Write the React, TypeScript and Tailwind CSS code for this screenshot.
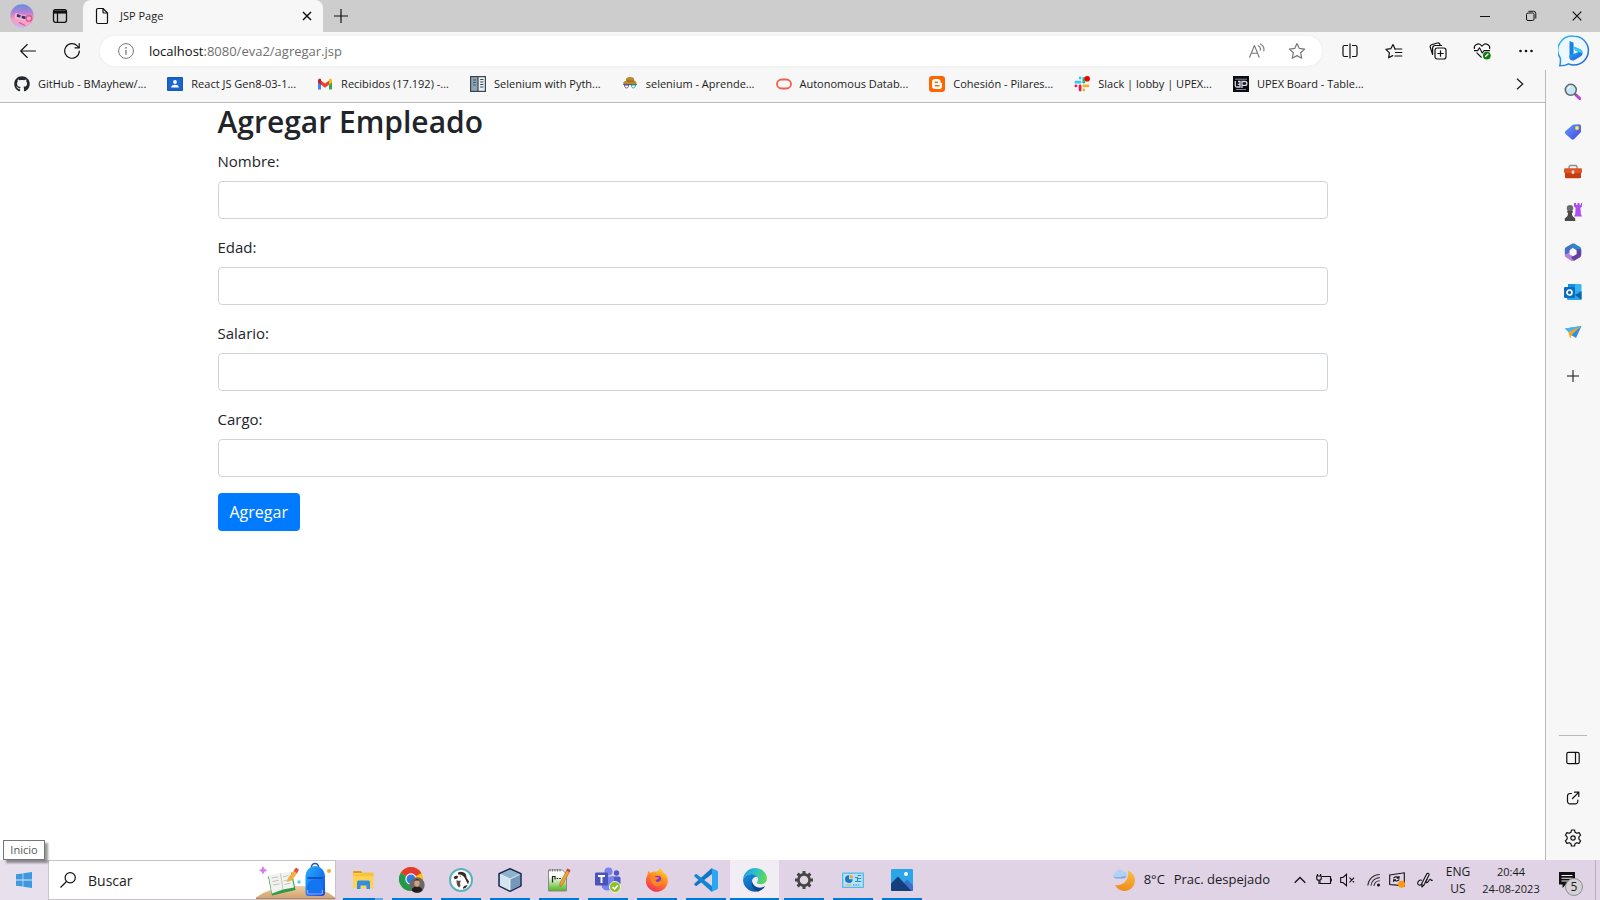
import type { ReactNode } from "react";
import { FaGithub } from "react-icons/fa";

type IconProps = { className?: string };

/* ---------- Title bar and toolbar icons ---------- */

const AvatarIcon = () => (
  <svg viewBox="0 0 24 24" className="size-6">
    <defs>
      <linearGradient id="avatarSky" x1="0" y1="0" x2="0" y2="1">
        <stop offset="0" stopColor="#5f8fe0" />
        <stop offset=".35" stopColor="#b97fd6" />
        <stop offset=".65" stopColor="#f49cc0" />
        <stop offset="1" stopColor="#c3b6f2" />
      </linearGradient>
    </defs>
    <circle cx="12" cy="12" r="11.700" fill="url(#avatarSky)" />
    <path d="M6 9l9 2.500 6 2-1.500 7-4 2-11-4.500z" fill="#f4a3c4" />
    <path d="M5.500 9l11 3-1.500 5L4.500 14z" fill="#f7b9d2" />
    <path d="M7 10l3.700 1-.5 2.700-3.500-1z M11.800 11.600l4 1-.5 2.700-3.700-1z" fill="#35336e" />
    <circle cx="19" cy="14.500" r="2.800" fill="none" stroke="#e0558f" strokeWidth="1.300" />
    <path d="M9 18.500l6 3" stroke="#e0558f" strokeWidth="1.300" />
  </svg>
);

const WorkspaceIcon = () => (
  <svg viewBox="0 0 16 16" className="size-4" fill="none" stroke="#111" strokeWidth="1.300">
    <rect x="1.500" y="1.700" width="13" height="12.600" rx="2" />
    <path d="M2 4h12" strokeWidth="3.200" />
    <path d="M5.500 5v9" />
  </svg>
);

const FileIcon = () => (
  <svg viewBox="0 0 14 18" className="h-[18px] w-[14px]" fill="none" stroke="#111" strokeWidth="1.200" strokeLinejoin="round">
    <path d="M3 1.500h5l4.500 4.500v9.500a1 1 0 0 1-1 1H3a1.500 1.500 0 0 1-1.500-1.500V3A1.500 1.500 0 0 1 3 1.500z" />
    <path d="M8 1.500V5a1 1 0 0 0 1 1h3.500" />
  </svg>
);

const CrossIcon = ({ className = "size-[10px]" }: IconProps) => (
  <svg viewBox="0 0 10 10" className={className} fill="none" stroke="#111" strokeWidth="1.200">
    <path d="M.7.7l8.600 8.600M9.300.7L.7 9.300" />
  </svg>
);

const TabCloseIcon = () => (
  <svg viewBox="0 0 10 10" className="size-[10px]" fill="none" stroke="#111" strokeWidth="1.500">
    <path d="M1 1l8 8M9 1L1 9" />
  </svg>
);

const PlusIcon = ({ className = "size-[14px]" }: IconProps) => (
  <svg viewBox="0 0 14 14" className={className} fill="none" stroke="#111" strokeWidth="1.200">
    <path d="M7 0v14M0 7h14" />
  </svg>
);

const RestoreIcon = () => (
  <svg viewBox="0 0 10 10" className="size-[10px]" fill="none" stroke="#111" overflow="visible">
    <rect x=".5" y="2" width="7.500" height="7.500" rx="1.500" />
    <path d="M2.500.3H7.500A2.300 2.300 0 0 1 9.800 2.600V7.500" />
  </svg>
);

const BackIcon = () => (
  <svg viewBox="0 0 16 16" className="size-4" fill="none" stroke="#111" strokeWidth="1.100" strokeLinecap="round" strokeLinejoin="round">
    <path d="M15.500 8H.7M7.200 1.500L.7 8l6.500 6.500" />
  </svg>
);

const ReloadIcon = () => (
  <svg viewBox="0 0 16 16" className="size-4" fill="none" stroke="#111" strokeWidth="1.200" strokeLinecap="round" strokeLinejoin="round">
    <path d="M15.300 8A7.300 7.300 0 1 1 13.200 2.800L15 4.600" />
    <path d="M15.200.6v4.200H11" />
  </svg>
);

const InfoIcon = () => (
  <svg viewBox="0 0 16 16" className="size-4" fill="none" stroke="#777">
    <circle cx="8" cy="8" r="7.400" />
    <path d="M8 7v4.700" strokeWidth="1.300" />
    <circle cx="8" cy="4.800" r=".9" fill="#777" stroke="none" />
  </svg>
);

const ReadAloudIcon = () => (
  <svg viewBox="0 0 16 16" className="size-4" fill="none" stroke="#777" strokeWidth="1.100" strokeLinecap="round" strokeLinejoin="round">
    <path d="M.6 14.200L5.400 2.500l4.800 11.700M2.200 10.300h6.400" />
    <path d="M9.200 2.700a3.800 3.800 0 0 1 2 4.600M11.500.9a6.600 6.600 0 0 1 3.300 7" />
  </svg>
);

const StarIcon = () => (
  <svg viewBox="0 0 18 18" className="size-[18px]" fill="none" stroke="#777" strokeWidth="1.200" strokeLinejoin="round">
    <path d="M9 1.500l2.300 4.900 5.300.7-3.900 3.700 1 5.400L9 13.600l-4.700 2.600 1-5.400L1.400 7.100l5.300-.7z" />
  </svg>
);

const SplitIcon = () => (
  <svg viewBox="0 0 16 16" className="size-4" fill="none" stroke="#111" strokeWidth="1.200">
    <path d="M6 2.500H2.500A1.500 1.500 0 0 0 1 4v8a1.500 1.500 0 0 0 1.500 1.500H6M10 2.500h3.500A1.500 1.500 0 0 1 15 4v8a1.500 1.500 0 0 1-1.500 1.500H10M8 .5v15" />
  </svg>
);

const FavoritesIcon = () => (
  <svg viewBox="0 0 18 16" className="h-4 w-[18px]" fill="none" stroke="#111" strokeWidth="1.200" strokeLinejoin="round" strokeLinecap="round">
    <path d="M10 6L8 1.500 5.800 5.700.9 6.400l3.500 3.500-.8 4.900L7.700 12.600" />
    <path d="M10 6h6.800M10.500 9.500h6.300M10 13h6.800" />
  </svg>
);

const CollectionsIcon = () => (
  <svg viewBox="0 0 18 18" className="size-[18px]" fill="none" stroke="#111" strokeWidth="1.200" strokeLinecap="round" strokeLinejoin="round">
    <rect x="6" y="6" width="11" height="11" rx="2.200" />
    <path d="M11.500 8.800v5.400M8.800 11.500h5.400" />
    <path d="M3.600 12.500L1.300 5.300A2 2 0 0 1 2.600 2.800L8.300 1a2 2 0 0 1 2.500 1.300l.4 1.200M3.600 12.500V6.200a2.700 2.700 0 0 1 2.700-2.700h6.200" />
  </svg>
);

const HeartPulseIcon = () => (
  <svg viewBox="0 0 18 18" className="size-[18px]" fill="none" stroke="#111" strokeWidth="1.100" strokeLinejoin="round">
    <path d="M1.400 7A4 4 0 0 1 8.200 3.300l.8.900.8-.9a4 4 0 0 1 6.800 3.700M3.600 10.700L8.500 15.500" />
    <path d="M1 8.600h3.700l1.800-2.800 2.700 5.200 1.800-2.400h6" />
    <circle cx="13.800" cy="13.600" r="3.900" fill="#107c10" stroke="none" />
    <path d="M12.200 14.800l3.100-3" stroke="#fff" strokeWidth="1.500" />
  </svg>
);

const DotsIcon = () => (
  <svg viewBox="0 0 16 4" className="h-1 w-4" fill="#111">
    <circle cx="2.500" cy="2" r="1.300" />
    <circle cx="8" cy="2" r="1.300" />
    <circle cx="13.500" cy="2" r="1.300" />
  </svg>
);

const BingIcon = () => (
  <svg viewBox="0 0 32 32" className="size-8">
    <defs>
      <linearGradient id="bingRing" x1="0" y1="0" x2="1" y2="1">
        <stop offset="0" stopColor="#35c5ee" />
        <stop offset="1" stopColor="#2456d8" />
      </linearGradient>
      <linearGradient id="bingMark" x1="0" y1="0" x2=".6" y2="1">
        <stop offset="0" stopColor="#1f7fe8" />
        <stop offset=".5" stopColor="#1d9bea" />
        <stop offset="1" stopColor="#2f5ce0" />
      </linearGradient>
    </defs>
    <path d="M16 1.200a14.300 14.300 0 1 1 0 28.800c-2.200 0-3.700-.3-5.500-1.200-2.500 1.500-5.500 2-8.700 2 .6-2.300.8-4.500.6-7.300A14.300 14.300 0 0 1 16 1.200z" fill="#eef7fe" stroke="url(#bingRing)" strokeWidth="1.500" />
    <path d="M11.500 6l4.100 1.700v12.800l-4.100 3.300z" fill="#1a80e6" />
    <path d="M11.500 20.500L20.500 17l-3.300-1.500-1.600-4 6.500 2.800c2 .9 2.500 2.300 2.400 4-.1 1.500-.8 2.500-2 3.200l-6.400 3.700c-2.200 1.200-4.600-.6-4.600-2.700z" fill="url(#bingMark)" />
    <path d="M15.600 11.500l6.500 2.800c2 .9 2.500 2.300 2.400 4L20.500 17l-3.300-1.500z" fill="#32cdea" />
  </svg>
);

/* ---------- Bookmark icons ---------- */

const ClassroomIcon = () => (
  <svg viewBox="0 0 16 16" className="size-4">
    <rect y="1" width="16" height="14" rx="1" fill="#185abc" />
    <rect x="1.500" y="2.500" width="13" height="11" fill="#1967d2" />
    <circle cx="8" cy="6" r="1.900" fill="#fff" />
    <path d="M4.200 11.500c0-2 2-2.700 3.800-2.700s3.800.7 3.800 2.700z" fill="#fff" />
  </svg>
);

const GmailIcon = () => (
  <svg viewBox="0 0 16 16" className="size-4">
    <path d="M1 4v9.500h3V7.500z" fill="#4285f4" />
    <path d="M15 4v9.500h-3V7.500z" fill="#34a853" />
    <path d="M4 4.500l4 3 4-3v4.300l-4 3-4-3z" fill="#ea4335" />
    <path d="M1 4.500A1.900 1.900 0 0 1 4 3v5.800L1 6.500z" fill="#c5221f" />
    <path d="M15 4.500A1.900 1.900 0 0 0 12 3v5.800l3-2.300z" fill="#fbbc04" />
  </svg>
);

const BookIcon = () => (
  <svg viewBox="0 0 16 16" className="size-4">
    <rect width="16" height="16" fill="#37474f" />
    <rect x="1.200" y="1.200" width="6.200" height="13.600" fill="#90a4b5" />
    <rect x="8.600" y="1.200" width="6.200" height="13.600" fill="#e8edf1" />
    <path d="M3 4h3M3 6.500h3M3 9h3" stroke="#455a64" strokeWidth="1.200" />
    <path d="M10.200 3.500h3.200M10.200 6h3.200M10.200 8.500h3.200M10.200 11h3.200" stroke="#37474f" strokeWidth="1.100" />
  </svg>
);

const PythonGlassesIcon = () => (
  <svg viewBox="0 0 16 16" className="size-4">
    <circle cx="8" cy="8" r="7.500" fill="#fff" />
    <path d="M3.800 5c-.2-2.500 1-4 4.200-4s4.500 1 4.300 3.500c1.700.2 2.200 1.800 2.400 3.500H1.200c0-2 .8-3 2.600-3z" fill="#b9882f" />
    <path d="M5 4.500c2 1.200 4 .9 6.500.5" stroke="#8a5f18" fill="none" />
    <path d="M1.200 8.500h13.600" stroke="#2c6d76" />
    <path d="M2.500 9h4.200c0 4-4.200 4-4.200 0z" fill="#fff" stroke="#7c3e86" />
    <path d="M9.300 9h4.200c0 4-4.200 4-4.200 0z" fill="#fff" stroke="#2b9a95" />
  </svg>
);

const OracleIcon = () => (
  <svg viewBox="0 0 16 16" className="size-4">
    <rect x="1" y="3.500" width="14" height="9" rx="4.500" fill="none" stroke="#f0604d" strokeWidth="1.800" />
  </svg>
);

const BloggerIcon = () => (
  <svg viewBox="0 0 16 16" className="size-4">
    <rect width="16" height="16" rx="3" fill="#ff6500" />
    <path d="M6.300 3h2.500a2.700 2.700 0 0 1 2.700 2.700c0 .9.200 1.100.8 1.100.5 0 .7.300.7.800v2.600A2.800 2.800 0 0 1 10.200 13H6a3 3 0 0 1-3-3V6.200A3.200 3.200 0 0 1 6.300 3z" fill="#fff" />
    <path d="M6.200 6.200h2.300M6.200 9.800h3.800" stroke="#ff6500" strokeWidth="1.400" strokeLinecap="round" />
  </svg>
);

const SlackIcon = () => (
  <svg viewBox="0 0 16 16" className="size-4" strokeLinecap="round" strokeWidth="2.800" fill="none">
    <path d="M1.900 6.200h4.200M6.100 2v.1" stroke="#36c5f0" />
    <path d="M9.800 2.500v3.700" stroke="#2eb67d" />
    <path d="M9.800 9.900H14M9.800 14v.1" stroke="#ecb22e" />
    <path d="M6.100 9.900V14M1.900 9.900H2" stroke="#e01e5a" />
    <circle cx="13.200" cy="2.800" r="2.800" fill="#f20000" />
  </svg>
);

const UpexIcon = () => (
  <svg viewBox="0 0 16 16" className="size-4">
    <rect width="16" height="16" fill="#0b0b12" />
    <path d="M2 3.200h12M3 13.500h10" stroke="#85869a" />
    <path d="M2.300 5v4.500a1.500 1.500 0 0 0 1.500 1.500H7V5.500H5M9 12V5.500h3a1.900 1.900 0 0 1 0 3.800H9.500M4.700 8.300H7" fill="none" stroke="#dcdce6" strokeWidth="1.300" />
  </svg>
);

/* ---------- Sidebar icons ---------- */

const LensIcon = () => (
  <svg viewBox="0 0 18 18" className="size-[18px]">
    <path d="M12 12l3.700 3.500" stroke="#c03be8" strokeWidth="3" strokeLinecap="round" />
    <path d="M10.300 10.300l2 2" stroke="#666" strokeWidth="2" />
    <circle cx="6.800" cy="6.800" r="5.500" fill="#c4e4fa" stroke="#666" strokeWidth="1.500" />
    <path d="M4 6a3.200 3.200 0 0 1 3-2.500" stroke="#fff" strokeWidth="1.200" fill="none" />
  </svg>
);

const TagIcon = () => (
  <svg viewBox="0 0 18 18" className="size-[18px]">
    <defs>
      <linearGradient id="tagFill" x1="0" y1="0" x2="1" y2="1">
        <stop offset="0" stopColor="#5c9dff" />
        <stop offset="1" stopColor="#4a46df" />
      </linearGradient>
    </defs>
    <path d="M10 1.500l5.300-.3a1.700 1.700 0 0 1 1.700 1.700v5.300c0 .5-.2.900-.5 1.200l-6.300 6.700a2 2 0 0 1-2.900 0L1.600 11a2 2 0 0 1 0-2.900l7-6c.4-.4.900-.6 1.400-.6z" fill="url(#tagFill)" />
    <circle cx="13" cy="5" r="1.500" fill="#fff" stroke="#f3c43c" strokeWidth="1.300" />
  </svg>
);

const ToolboxIcon = () => (
  <svg viewBox="0 0 18 18" className="size-[18px]">
    <path d="M5 6V4a1.500 1.500 0 0 1 1.500-1.500h5A1.500 1.500 0 0 1 13 4v2" fill="none" stroke="#8d8d8d" strokeWidth="1.300" />
    <path d="M1 9h16v5a1.300 1.300 0 0 1-1.300 1.300H2.300A1.300 1.300 0 0 1 1 14z" fill="#c43c10" />
    <rect y="5.200" width="18" height="5" rx="1.200" fill="#dc5623" />
    <path d="M7.700 7.500h2.600v2.700L9 11.200l-1.300-1z" fill="#d9d9d9" />
  </svg>
);

const ChessIcon = () => (
  <svg viewBox="0 0 18 18" className="size-[18px]">
    <path d="M10 0h2v1.700h1.500V0h2v1.700H17V0h1v3.500l-1.500 1.200.3 6L18 13.500h-8l1.300-2.800.3-6L10 3.500z" fill="#b14cf2" />
    <circle cx="6" cy="5.200" r="3.200" fill="#6b6b6b" />
    <path d="M3.200 8h5.600v1.500l-.9.500c0 2 .8 3.500 2.300 4.500l1 1V18H.8v-2.500l1-1C3.300 13.500 4.100 12 4.100 10l-.9-.5z" fill="#4a4a4a" />
  </svg>
);

const M365Icon = () => (
  <svg viewBox="0 0 18 18" className="size-[18px]">
    <path d="M8.500.5L2.200 4A2.800 2.800 0 0 0 .8 6.500v5.400L6 10V7l5-4V.800z" fill="#4a6fc9" />
    <path d="M.8 11.900L6 9.500l5.500 3.500-.5 4.500-1.500.3a2.600 2.600 0 0 1-2.300-.1L2.200 14.600A2.800 2.800 0 0 1 .8 11.900z" fill="#b184d8" />
    <path d="M6 3.200L10.500.700 15.800 3.800A2.800 2.800 0 0 1 17.200 6.300v5L12.500 7.300z" fill="#2e86d0" />
    <path d="M17.200 6.500v5.400a2.800 2.800 0 0 1-1.400 2.500L10 17.700l-3-3.500 5.300-3.400V6.500z" fill="#64419c" />
    <path d="M9 5.500l3.500 2v3.700L9 13.200l-3.500-2V7.500z" fill="#f7f7f7" />
  </svg>
);

const OutlookIcon = () => (
  <svg viewBox="0 0 18 18" className="size-[18px]">
    <rect x="4" y="1" width="13.500" height="9" rx="1" fill="#35b8f1" />
    <rect x="4" y="1" width="7" height="5" fill="#1490df" />
    <path d="M3 8h14.500v8a1 1 0 0 1-1 1H4a1 1 0 0 1-1-1z" fill="#28a8ea" />
    <path d="M17.500 8.500v8.300L11 12z" fill="#0f5fae" />
    <rect x="0" y="4" width="11" height="11" rx="1.200" fill="#0f6cbd" />
    <circle cx="5.500" cy="9.500" r="2.500" fill="none" stroke="#fff" strokeWidth="1.700" />
  </svg>
);

const PlaneIcon = () => (
  <svg viewBox="0 0 18 18" className="size-[18px]">
    <path d="M1 5.500L17.500 3 12 15l-4-2.500z" fill="#2f8fe8" />
    <path d="M1 5.500L17.500 3 6 10z" fill="#45b4f5" />
    <path d="M4.500 9L17 3.300 8.500 11 6 15.500z" fill="#f5a623" />
  </svg>
);

const PanelIcon = () => (
  <svg viewBox="0 0 14 14" className="size-[14px]" fill="none" stroke="#111" strokeWidth="1.200">
    <rect x=".8" y="1.300" width="12.400" height="11.400" rx="1.800" />
    <path d="M9.500 1.300v11.400" />
  </svg>
);

const OpenExternalIcon = () => (
  <svg viewBox="0 0 14 14" className="size-[14px]" fill="none" stroke="#111" strokeWidth="1.200" strokeLinecap="round">
    <path d="M5.500 2.500H4A2.500 2.500 0 0 0 1.500 5v5.300A2.500 2.500 0 0 0 4 12.800h5.300a2.500 2.500 0 0 0 2.500-2.500V9" />
    <path d="M6.500 7.500L12.700 1.300M8.500 1.200h4.300v4.300" />
  </svg>
);

const GearIcon = () => (
  <svg viewBox="0 0 18 18" className="size-[18px]" fill="none" stroke="#111" strokeWidth="1.200" strokeLinejoin="round">
    <path d="M7.500 1h3l.6 2.300 1.700 1 2.300-.7 1.500 2.600-1.700 1.700v2.200l1.700 1.700-1.500 2.600-2.300-.7-1.700 1-.6 2.300h-3l-.6-2.300-1.700-1-2.300.7-1.500-2.600 1.700-1.700V7.900L1.400 6.200l1.500-2.600 2.300.7 1.700-1z" />
    <circle cx="9" cy="9" r="2.200" />
  </svg>
);

/* ---------- Taskbar icons ---------- */

const WindowsIcon = () => (
  <svg viewBox="0 0 16 16" className="size-4" fill="#3c99e0">
    <path d="M0 2.300l6.600-.9v6.200H0zM7.300 1.300L16 0v7.600H7.300zM0 8.400h6.600v6.200L0 13.700zM7.300 8.400H16V16l-8.700-1.300z" />
  </svg>
);

const SearchIcon = () => (
  <svg viewBox="0 0 16 16" className="size-4" fill="none" stroke="#111" strokeWidth="1.200">
    <circle cx="10.200" cy="5.800" r="5.100" />
    <path d="M6.500 9.500L.5 15.500" />
  </svg>
);

const SchoolArt = () => (
  <svg viewBox="0 0 79 38" className="h-[38px] w-[79px]">
    <defs>
      <linearGradient id="packFill" x1="0" y1="0" x2="1" y2="1">
        <stop offset="0" stopColor="#29b0ff" />
        <stop offset="1" stopColor="#0a4fe0" />
      </linearGradient>
      <linearGradient id="deskFill" x1="0" y1="0" x2="0" y2="1">
        <stop offset="0" stopColor="#efcfa4" />
        <stop offset="1" stopColor="#d5a470" />
      </linearGradient>
    </defs>
    <path d="M0 36.500Q15 26 32 25h17Q66 26 79 36.500z" fill="url(#deskFill)" />
    <path d="M0 36.500h79V38H0z" fill="#b3825a" />
    <path d="M12 15.500l24-4L39.500 29 16 34.500z" fill="#2e9b46" />
    <path d="M12.500 14l11-1.500 11-2.500L38 26.500 27 28.500l-11 4z" fill="#f2f2ef" />
    <path d="M24.500 12.500L27 28.500" stroke="#c4c4c0" />
    <path d="M15.500 17l6.500-1M16.300 20.500l6.500-1.200M17 24l6.500-1.200M27 16l5.500-1.500M27.800 20l6-1.500M28.500 23.500l6-1.500" stroke="#b5b5b2" strokeWidth=".8" />
    <path d="M31 21l1-4 5.500-7 3.500 2.500-5.500 7z" fill="#f6ae3d" />
    <path d="M37.500 10l2.500-3.500 3 2-2 4z" fill="#ea4d45" />
    <path d="M7 5l1.500 3 3 1.300-3 1.500L7 13.500l-1.500-2.700-2.500-1.500L5.500 8z" fill="#dc7af2" />
    <circle cx="43" cy="21" r="1.800" fill="#64cfe6" />
    <circle cx="73" cy="10" r="2" fill="#f8b11e" />
    <path d="M55.500 7V6a3.500 3.500 0 0 1 7 0v1" fill="none" stroke="#1159bb" strokeWidth="1.600" />
    <path d="M49.500 32V15a9.700 10 0 0 1 19.500 0v17a3 3 0 0 1-3 3H52.500a3 3 0 0 1-3-3z" fill="url(#packFill)" />
    <path d="M51 33v-7a8 7.500 0 0 1 16 0v7z" fill="#1375f2" />
    <path d="M51.500 17h15" stroke="#0a3fb5" strokeWidth="1.400" />
    <path d="M51.500 29v2.500a1.500 1.500 0 0 0 1.500 1.500h12a1.500 1.500 0 0 0 1.500-1.500V29" fill="none" stroke="#b795ff" strokeWidth="1.200" />
  </svg>
);

const ExplorerIcon = () => (
  <svg viewBox="0 0 24 24" className="size-6">
    <path d="M2 4a1 1 0 0 1 1-1h7l2 2.500H2z" fill="#d99a17" />
    <rect x="2" y="5" width="20.500" height="15.500" rx="1" fill="#ffd253" />
    <path d="M2 6h9l1.500-1.500h9a1 1 0 0 1 1 1V8H2z" fill="#f7c23d" />
    <path d="M6 21v-7a1.500 1.500 0 0 1 1.500-1.500h10a1.500 1.500 0 0 1 1.500 1.500v7h-3.500v-3.500h-6V21z" fill="#2f8fdc" />
  </svg>
);

const ChromeIcon = () => (
  <svg viewBox="0 0 26 26" className="size-[26px]">
    <circle cx="12" cy="12" r="12" fill="#fbc116" />
    <path d="M12 12L1.600 6A12 12 0 0 1 22.400 6z" fill="#e33b2e" />
    <path d="M12 12L1.600 6A12 12 0 0 0 12 24l5-8.500z" fill="#229a4c" />
    <circle cx="12" cy="12" r="5.700" fill="#fff" />
    <circle cx="12" cy="12" r="4.500" fill="#2b7de9" />
    <circle cx="18" cy="18" r="7.700" fill="#6c6863" />
    <path d="M12.500 23.500c.5-2.500 2.500-4 5.500-4s5 1.500 5.500 4a7.700 7.700 0 0 1-11 0z" fill="#1f1f1f" />
    <ellipse cx="18" cy="16" rx="2.700" ry="3.800" fill="#d0a084" />
    <path d="M15.300 14.500c0-3.500 5.400-3.500 5.400 0l-1-1h-3.400z" fill="#39291f" />
  </svg>
);

const DBeaverIcon = () => (
  <svg viewBox="0 0 24 24" className="size-6">
    <circle cx="12" cy="12" r="11" fill="#fff" stroke="#5bb3b9" strokeWidth="2" />
    <path d="M9 4.500c3-1.500 6.500-.5 8 2l.5 3 2.500 4-1 3-3-6c-1-2.500-3.500-4.500-7-4z" fill="#382923" />
    <path d="M4.500 9l2.800-1.500 2 1-1 2-2.500.7z" fill="#382923" />
    <path d="M10.500 7.500l1.500.5-.7 1z" fill="#382923" />
    <path d="M7.500 12c1.500 1 3 1 4.500.5l-1 2.500.5 3-1.500 1.500c-2-1.500-2.500-4-2.500-7.500z" fill="#5b4a43" />
    <path d="M14 19.500c1.500-2 3-2.500 4.500-2l-2 2.500-2.500.7z" fill="#382923" />
  </svg>
);

const NetBeansIcon = () => (
  <svg viewBox="0 0 24 24" className="size-6" strokeLinejoin="round">
    <path d="M12 .8l11 5v12l-11 5.500-11-5.500v-12z" fill="#8fb2d0" stroke="#1d2a50" strokeWidth="1.500" />
    <path d="M12 1.800l10 4.500-10 4.500-10-4.500z" fill="#8fb2cc" />
    <path d="M2 6.500l10 4.500v11.500l-10-5z" fill="#d3e5ef" />
    <path d="M22 6.500L12 11v11.500l10-5z" fill="#7597ba" />
    <path d="M12 11v11M2.500 6.500L12 11l9.500-4.500" stroke="#f6fbff" strokeWidth=".8" fill="none" />
  </svg>
);

const NotepadIcon = () => (
  <svg viewBox="0 0 24 24" className="size-6">
    <defs>
      <linearGradient id="noteFill" x1="0" y1="0" x2="0" y2="1">
        <stop offset=".3" stopColor="#fdfffb" />
        <stop offset="1" stopColor="#4fb51b" />
      </linearGradient>
    </defs>
    <path d="M1.500 2h14l4 4v17h-18z" fill="url(#noteFill)" stroke="#8a8a8a" />
    <path d="M3 1v2.500M5.500 1v2.500M8 1v2.500M10.500 1v2.500M13 1v2.500" stroke="#777" />
    <path d="M5.500 8v6.500M5.500 8.500h2.500v3" stroke="#222" strokeWidth="1.200" fill="none" />
    <path d="M9.500 10.500h1.700M12.200 10.500h1.700" stroke="#222" />
    <path d="M20.500.8l2.700 1.600L15.500 17l-2.700 1.700.2-3.500z" fill="#f0a92b" stroke="#9a5c28" strokeWidth=".6" />
    <path d="M20.500.8l2.700 1.600-1 1.800-2.700-1.600z" fill="#cb3c3c" />
  </svg>
);

const TeamsIcon = () => (
  <svg viewBox="0 0 26 26" className="size-[26px]">
    <circle cx="13.500" cy="4.500" r="4" fill="#7b83eb" />
    <circle cx="21.500" cy="6" r="2.700" fill="#5059c9" />
    <path d="M16 9.500h8a1.500 1.500 0 0 1 1.500 1.500v5a5 5 0 0 1-9.500 1z" fill="#5059c9" />
    <path d="M7 9.500h12v8a6.500 6.500 0 0 1-12 3z" fill="#7b83eb" />
    <rect x="0" y="5.500" width="13" height="13" rx="1.200" fill="#4b53bc" />
    <path d="M3 9h7M6.500 9v7" stroke="#fff" strokeWidth="1.900" />
    <circle cx="20" cy="20" r="5.500" fill="#8cc024" stroke="#f1f1f1" />
    <path d="M17.500 20l2 2 3.300-3.600" stroke="#fff" strokeWidth="1.600" fill="none" />
  </svg>
);

const FirefoxIcon = () => (
  <svg viewBox="0 0 24 24" className="size-6">
    <defs>
      <linearGradient id="foxFill" x1=".8" y1="0" x2=".3" y2="1">
        <stop offset="0" stopColor="#ffdf3a" />
        <stop offset=".45" stopColor="#ff8a1c" />
        <stop offset="1" stopColor="#ee2c5d" />
      </linearGradient>
    </defs>
    <path d="M14.500 0c3 2.500 4.500 4.500 5 6.500l.5-1.500c2.500 3 3.200 6 2.800 9A11 11 0 1 1 2.500 7c0-1.500.5-3 1.500-4.300L5 5l3.500-1.500c1-.2 2 0 3 .3 1-.8 2.500-1.500 3-3.800z" fill="url(#foxFill)" />
    <circle cx="12.500" cy="12.500" r="4.800" fill="#7a3ad0" />
    <path d="M5 9.500c2-1.500 4-1.500 6-.5l3 .5c-.5 1.500-2 2-3.500 2.500.5 2.500 3.500 2.500 5 .5 1-1.500.5-4-1.500-6 5 2 5 9 1.500 11s-9 .5-10.500-8z" fill="#ff8427" />
  </svg>
);

const VSCodeIcon = () => (
  <svg viewBox="0 0 24 24" className="size-6">
    <path d="M.5 15.500a1 1 0 0 0 0 1.300l1 .9a1 1 0 0 0 1.300 0L18 6V.300a1.400 1.400 0 0 0-1 .4z" fill="#0f78c4" />
    <path d="M.5 8.500a1 1 0 0 1 0-1.300l1-.9a1 1 0 0 1 1.300 0L18 18v5.700a1.400 1.400 0 0 1-1-.4z" fill="#1485d4" />
    <path d="M17 23.500c.5.400 1 .3 1.500 0l4.700-2.200a1.400 1.400 0 0 0 .8-1.300V4a1.400 1.400 0 0 0-.8-1.300L18.500.500c-.5-.3-1-.4-1.500 0 .6-.4 1-.1 1 .6v21.800c0 .7-.4 1-1 .6z" fill="#2ba7f2" />
  </svg>
);

const EdgeIcon = () => (
  <svg viewBox="0 0 24 24" className="size-6">
    <defs>
      <linearGradient id="edgeTop" x1="0" y1=".3" x2="1" y2=".5">
        <stop offset="0" stopColor="#1c9de0" />
        <stop offset=".5" stopColor="#2bc3c4" />
        <stop offset="1" stopColor="#68d94e" />
      </linearGradient>
      <linearGradient id="edgeBody" x1="0" y1="0" x2=".6" y2="1">
        <stop offset="0" stopColor="#178fe0" />
        <stop offset="1" stopColor="#0c57ad" />
      </linearGradient>
    </defs>
    <path d="M0 12C.3 5 5.500 0 12 0c7 0 12 5 12 10.300 0 3.500-2.600 6-6.200 6-2.400 0-4-.8-4-1.700 0-.7 1.200-1.200 1.200-3.200C15 8.200 12 6 8.500 6 4 6 .8 9 0 12z" fill="url(#edgeTop)" />
    <path d="M0 12C.8 9 4 6 8.500 6c2.500 0 4.700 1 6 2.900-2-1-5.500 1-5.500 4.600 0 3.800 3.500 6.500 7.500 6.500 2 0 4-.7 5.500-1.700A12 12 0 0 1 0 12z" fill="url(#edgeBody)" />
    <path d="M9 13.500C8 19 12 23 15.500 23.400c2.800-1 5-2.900 6.500-5.100-5.500 3-11.500.7-13-4.800z" fill="#0d468f" />
  </svg>
);

const SettingsCogIcon = () => (
  <svg viewBox="0 0 20 20" className="size-5" fill="none" stroke="#444">
    <circle cx="10" cy="10" r="5.600" strokeWidth="2.600" />
    <path d="M10 1v3M10 16v3M1 10h3M16 10h3M3.600 3.600l2.200 2.200M14.200 14.200l2.200 2.200M3.600 16.400l2.200-2.200M14.200 5.800l2.200-2.200" strokeWidth="3" />
  </svg>
);

const ControlPanelIcon = () => (
  <svg viewBox="0 0 24 24" className="size-6">
    <rect x="1" y="4.500" width="22" height="15.500" rx="1" fill="#59b8e8" />
    <rect x="2.300" y="5.800" width="19.400" height="13" fill="#b3e4f8" />
    <path d="M8 7.300v4h3.700A3.800 3.800 0 1 1 8 7.300z" fill="#1f73c1" />
    <path d="M8.800 6.800a3.500 3.500 0 0 1 3.400 3.500H8.800z" fill="#f2a52e" />
    <path d="M14 9.500h2.500v4H14M16.500 7.500h3.700M16.500 10.500h3.700M16.500 13.500h3.700" stroke="#2d8dca" strokeWidth="1.200" fill="none" />
    <path d="M4.500 17h6" stroke="#eda735" />
    <path d="M12 17h7" stroke="#2d8dca" strokeDasharray="1.500 1" />
  </svg>
);

const PhotosIcon = () => (
  <svg viewBox="0 0 22 22" className="size-[22px]">
    <rect width="22" height="22" rx="1" fill="#2ba6e8" />
    <path d="M11 16L16 10.500l6 6V21a1 1 0 0 1-1 1H11z" fill="#3f6fc9" />
    <path d="M0 14.500L7 7.500 20.500 22H1a1 1 0 0 1-1-1z" fill="#133f7d" />
    <circle cx="15" cy="5" r="2" fill="#fff" />
  </svg>
);

const MoonIcon = () => (
  <svg viewBox="0 0 24 24" className="size-6">
    <defs>
      <linearGradient id="moonFill" x1=".6" y1="0" x2=".4" y2="1">
        <stop offset="0" stopColor="#fbbd3c" />
        <stop offset="1" stopColor="#ef8a1d" />
      </linearGradient>
    </defs>
    <path d="M16 2.500a10.500 10.500 0 1 1-13 14.500c7 1 14.500-4 13-14.500z" fill="url(#moonFill)" />
    <path d="M4 10.500a3.200 3.200 0 0 1 0-6.300A4.200 4.200 0 0 1 11.500 3.500a3.500 3.500 0 0 1 .5 7z" fill="#b4d0f4" />
    <path d="M4 10.500a3.200 3.200 0 0 1-2.800-2c4 1 9 .5 13-1A3.300 3.300 0 0 1 12 10.500z" fill="#83abe5" />
  </svg>
);

const TrayChevronIcon = () => (
  <svg viewBox="0 0 12 8" className="h-2 w-3" fill="none" stroke="#111" strokeWidth="1.300">
    <path d="M.7 6.800L6 1.500l5.300 5.300" />
  </svg>
);

const BatteryIcon = () => (
  <svg viewBox="0 0 16 12" className="h-3 w-4" fill="none" stroke="#111" strokeWidth="1.100">
    <path d="M6 2.500h8.500v7H4V7M15.300 4.500v3" />
    <path d="M1.500 0v2M4.500 0v2M.7 2h4.600v2A2.300 2.300 0 0 1 .7 4zM3 6.300V10" />
  </svg>
);

const MutedIcon = () => (
  <svg viewBox="0 0 16 14" className="h-[14px] w-4" fill="none" stroke="#111" strokeWidth="1.100">
    <path d="M.7 4.500H3L6.500 1.300v11.400L3 9.500H.7zM9.500 4.700l4.600 4.600M14.100 4.700L9.500 9.300" />
  </svg>
);

const WifiIcon = () => (
  <svg viewBox="0 0 14 14" className="size-[14px]" fill="none" stroke="#333" strokeWidth="1.100">
    <path d="M.8 12.500A12 12 0 0 1 12.800 1.500M4 12.800A8.800 8.800 0 0 1 12.800 4.600M7 13a5.800 5.800 0 0 1 5.800-5.200" />
    <circle cx="11.500" cy="12" r="1.500" fill="#111" stroke="none" />
  </svg>
);

const SyncIcon = () => (
  <svg viewBox="0 0 16 16" className="size-4" fill="none" stroke="#111" strokeWidth="1.100">
    <path d="M.7 3L15.300.8v13L.7 12.500zM4.500 6.300c1-1.800 4-2 5.200-.3M10 4v2.300H7.800M10.200 7.500c-1 1.800-4 2-5.200.3M4.700 10V7.700h2.200" />
    <circle cx="12.500" cy="12.300" r="3.500" fill="#ff9a0a" stroke="none" />
  </svg>
);

const PenIcon = () => (
  <svg viewBox="0 0 16 16" className="size-4" fill="none" stroke="#111" strokeWidth="1.100" strokeLinecap="round" strokeLinejoin="round">
    <path d="M4.500 8.200C2.500 7.500.5 9.500.7 11.500s2.800 2.500 3.800.5L9.800 1.800c.6-1 2.700-.2 2.200 1.100L7 13l-2.200 2 .3-3" />
    <path d="M10 7.500c-1.500 2-1.200 4 .3 3s1.700-3 3-3.200.3 2 2 1" />
  </svg>
);

const ActionCenterIcon = () => (
  <svg viewBox="0 0 16 16" className="size-4">
    <path d="M0 0h16v12.500H7L3.500 16v-3.500H0z" fill="#111" />
    <path d="M2.500 3.500h11M2.500 6.200h11M2.500 9h7" stroke="#f3ebf5" strokeWidth="1.100" />
  </svg>
);

/* ---------- Data ---------- */

const bookmarks: { label: string; icon: ReactNode }[] = [
  { label: "GitHub - BMayhew/...", icon: <FaGithub className="size-4 text-[#24292f]" /> },
  { label: "React JS Gen8-03-1...", icon: <ClassroomIcon /> },
  { label: "Recibidos (17.192) -...", icon: <GmailIcon /> },
  { label: "Selenium with Pyth...", icon: <BookIcon /> },
  { label: "selenium - Aprende...", icon: <PythonGlassesIcon /> },
  { label: "Autonomous Datab...", icon: <OracleIcon /> },
  { label: "Cohesión - Pilares...", icon: <BloggerIcon /> },
  { label: "Slack | lobby | UPEX...", icon: <SlackIcon /> },
  { label: "UPEX Board - Table...", icon: <UpexIcon /> },
];

const toolbarActions: { label: string; icon: ReactNode }[] = [
  { label: "Pantalla dividida", icon: <SplitIcon /> },
  { label: "Favoritos", icon: <FavoritesIcon /> },
  { label: "Colecciones", icon: <CollectionsIcon /> },
  { label: "Rendimiento", icon: <HeartPulseIcon /> },
  { label: "Configuración y más", icon: <DotsIcon /> },
];

const sidebarApps: { label: string; icon: ReactNode }[] = [
  { label: "Búsqueda", icon: <LensIcon /> },
  { label: "Compras", icon: <TagIcon /> },
  { label: "Herramientas", icon: <ToolboxIcon /> },
  { label: "Juegos", icon: <ChessIcon /> },
  { label: "Microsoft 365", icon: <M365Icon /> },
  { label: "Outlook", icon: <OutlookIcon /> },
  { label: "Drop", icon: <PlaneIcon /> },
];

const sidebarTools: { label: string; icon: ReactNode }[] = [
  { label: "Ocultar barra lateral", icon: <PanelIcon /> },
  { label: "Abrir vínculo", icon: <OpenExternalIcon /> },
  { label: "Configuración", icon: <GearIcon /> },
];

const taskbarApps: { label: string; icon: ReactNode; active?: boolean; stacked?: boolean }[] = [
  { label: "Explorador de archivos", icon: <ExplorerIcon />, stacked: true },
  { label: "Chrome", icon: <ChromeIcon /> },
  { label: "DBeaver", icon: <DBeaverIcon /> },
  { label: "NetBeans", icon: <NetBeansIcon /> },
  { label: "Notepad++", icon: <NotepadIcon /> },
  { label: "Teams", icon: <TeamsIcon /> },
  { label: "Firefox", icon: <FirefoxIcon /> },
  { label: "Visual Studio Code", icon: <VSCodeIcon /> },
  { label: "Edge", icon: <EdgeIcon />, active: true },
  { label: "Ajustes", icon: <SettingsCogIcon /> },
  { label: "Panel de control", icon: <ControlPanelIcon /> },
  { label: "Fotos", icon: <PhotosIcon /> },
];

const fields = [
  { id: "nombre", label: "Nombre:" },
  { id: "edad", label: "Edad:" },
  { id: "salario", label: "Salario:" },
  { id: "cargo", label: "Cargo:" },
];

/* ---------- Sections ---------- */

function TitleBar() {
  return (
    <div className="flex h-8 bg-[#cdcdcd]">
      <div className="flex w-[83px] items-center gap-[18px] pl-[10px]">
        <button aria-label="Perfil"><AvatarIcon /></button>
        <button aria-label="Áreas de trabajo"><WorkspaceIcon /></button>
      </div>
      <div className="flex w-60 items-center rounded-t-lg bg-[#f7f7f7] pr-[11px] pl-3">
        <FileIcon />
        <span className="ml-[11px] flex-1 text-[11px]">JSP Page</span>
        <button aria-label="Cerrar pestaña"><TabCloseIcon /></button>
      </div>
      <button aria-label="Nueva pestaña" className="flex w-9 items-center justify-center"><PlusIcon /></button>
      <div className="ml-auto flex">
        <button aria-label="Minimizar" className="flex w-[46px] items-center justify-center">
          <span className="h-px w-[10px] bg-[#111]" />
        </button>
        <button aria-label="Restaurar" className="flex w-[46px] items-center justify-center"><RestoreIcon /></button>
        <button aria-label="Cerrar" className="flex w-[46px] items-center justify-center"><CrossIcon /></button>
      </div>
    </div>
  );
}

function Toolbar() {
  return (
    <div className="flex h-[38px] items-center bg-[#f7f7f7]">
      <div className="flex w-[100px] gap-7 pl-5">
        <button aria-label="Atrás"><BackIcon /></button>
        <button aria-label="Actualizar"><ReloadIcon /></button>
      </div>
      <div className="flex h-[30px] flex-1 items-center rounded-full bg-white pr-4 pl-[18px] shadow-[0_0_4px_rgba(0,0,0,0.05)]">
        <InfoIcon />
        <a href="#pagina" className="ml-[15px] flex-1 pt-px text-[13px] text-[#6f6f6f]">
          <span className="text-[#111]">localhost</span>:8080/eva2/agregar.jsp
        </a>
        <button aria-label="Leer en voz alta"><ReadAloudIcon /></button>
        <button aria-label="Agregar a favoritos" className="ml-[23px]"><StarIcon /></button>
      </div>
      <div className="ml-[6px] flex items-center">
        {toolbarActions.map((action) => (
          <button key={action.label} aria-label={action.label} className="flex w-11 justify-center">
            {action.icon}
          </button>
        ))}
      </div>
      <button aria-label="Bing" className="flex w-[52px] justify-center"><BingIcon /></button>
    </div>
  );
}

function BookmarksBar() {
  return (
    <nav aria-label="Marcadores" className="flex h-[33px] items-center gap-[21px] border-b border-[#b9b9b9] bg-[#f7f7f7] pb-1 pl-[14px]">
      {bookmarks.map((bookmark) => (
        <a key={bookmark.label} href="#marcador" className="flex shrink-0 items-center gap-2 text-[11px] whitespace-nowrap">
          {bookmark.icon}
          {bookmark.label}
        </a>
      ))}
      <button aria-label="Más marcadores" className="mr-[21px] ml-auto">
        <svg viewBox="0 0 8 12" className="h-3 w-2" fill="none" stroke="#222" strokeWidth="1.300">
          <path d="M1 .8L6.700 6 1 11.200" />
        </svg>
      </button>
    </nav>
  );
}

function EmployeeForm() {
  return (
    <main id="pagina" className="mx-auto w-full max-w-[1140px] px-[15px] text-[#212529]">
      <h1 className="mb-2 text-[30px] leading-[38px] font-semibold">Agregar Empleado</h1>
      <form className="leading-6" onSubmit={(event) => event.preventDefault()}>
        {fields.map((field) => (
          <div key={field.id} className="mb-4">
            <label htmlFor={field.id} className="mb-2 block text-[15px] leading-6">{field.label}</label>
            <input
              id={field.id}
              name={field.id}
              type="text"
              className="block h-[38px] w-full rounded border border-[#ced4da] bg-white px-3"
            />
          </div>
        ))}
        <button type="submit" className="h-[38px] rounded bg-[#007bff] px-3 text-base text-white">Agregar</button>
      </form>
    </main>
  );
}

function Sidebar() {
  return (
    <aside className="flex w-[55px] flex-col items-center border-l border-[#b9b9b9] bg-[#f7f7f7] py-[2px]">
      {sidebarApps.map((app) => (
        <button key={app.label} aria-label={app.label} className="flex h-10 w-10 items-center justify-center">
          {app.icon}
        </button>
      ))}
      <button aria-label="Personalizar" className="mt-1 flex h-10 w-10 items-center justify-center">
        <PlusIcon className="size-3" />
      </button>
      <div className="mt-auto flex flex-col items-center">
        <div className="mb-[2px] h-px w-7 bg-[#b9b9b9]" />
        {sidebarTools.map((tool) => (
          <button key={tool.label} aria-label={tool.label} className="flex h-10 w-10 items-center justify-center">
            {tool.icon}
          </button>
        ))}
      </div>
    </aside>
  );
}

function Taskbar() {
  return (
    <footer className="flex h-10 bg-[#e0d3e6] text-[13px]">
      <div className="relative flex">
        <button aria-label="Inicio" className="flex w-12 items-center justify-center bg-[#e9e0ee]"><WindowsIcon /></button>
        <div
          role="tooltip"
          className="absolute bottom-full left-[3px] flex h-5 w-[42px] items-center justify-center border border-[#767676] bg-white text-[11px] text-[#575757] shadow-[3px_3px_2px_rgba(0,0,0,0.4)]"
        >
          Inicio
        </div>
      </div>
      <label className="flex w-[288px] items-center border border-[#c8c3cb] bg-white pl-[11px]">
        <SearchIcon />
        <input
          type="text"
          aria-label="Buscar"
          placeholder="Buscar"
          className="ml-3 w-0 flex-1 text-[14px] text-[#222] placeholder:text-[#222]"
        />
        <SchoolArt />
      </label>
      <div className="ml-[2px] flex">
        {taskbarApps.map((app) => (
          <button
            key={app.label}
            aria-label={app.label}
            className={app.active ? "flex w-[49px] flex-col items-center bg-[#f2edf5]" : "flex w-[49px] flex-col items-center"}
          >
            <span className="flex flex-1 items-center pt-px">{app.icon}</span>
            <span className={app.active ? "flex h-[2px] w-full bg-[#0078d7]" : "flex h-[2px] w-10 bg-[#0078d7]"}>
              {app.stacked && <span className="ml-auto w-2 bg-[#65aae4]" />}
            </span>
          </button>
        ))}
      </div>
      <div className="ml-auto flex items-center">
        <button className="flex items-center">
          <MoonIcon />
          <span className="ml-2 w-[30px] text-left whitespace-nowrap">8°C</span>
          <span className="whitespace-nowrap">Prac. despejado</span>
        </button>
        <div className="ml-6 flex items-center">
          <button aria-label="Mostrar iconos ocultos"><TrayChevronIcon /></button>
          <button aria-label="Batería" className="ml-[10px]"><BatteryIcon /></button>
          <button aria-label="Volumen" className="ml-2"><MutedIcon /></button>
          <button aria-label="Red" className="ml-[11px]"><WifiIcon /></button>
          <button aria-label="Sincronización" className="ml-2"><SyncIcon /></button>
          <button aria-label="Lápiz" className="ml-3"><PenIcon /></button>
        </div>
        <button className="ml-3 w-[26px] text-center text-[12px] leading-[17px]">ENG<br />US</button>
        <button className="ml-[10px] w-[60px] text-center text-[11px] leading-[17px] whitespace-nowrap">20:44<br />24-08-2023</button>
        <button aria-label="Notificaciones" className="relative ml-[18px]">
          <ActionCenterIcon />
          <span className="absolute top-[6px] left-[6px] flex size-[18px] items-center justify-center rounded-full border border-[#8d8d8d] bg-[#d5d2d7] text-[12px]">5</span>
        </button>
        <div className="ml-5 h-10 w-[5px] border-l border-[#b9b0bd]" />
      </div>
    </footer>
  );
}

export default function App() {
  return (
    <div className="flex min-h-screen flex-col bg-white font-['Open_Sans',sans-serif] text-[#1b1b1b]">
      <header>
        <TitleBar />
        <Toolbar />
      </header>
      <div className="flex flex-1">
        <div className="min-w-0 flex-1">
          <BookmarksBar />
          <EmployeeForm />
        </div>
        <Sidebar />
      </div>
      <Taskbar />
    </div>
  );
}
